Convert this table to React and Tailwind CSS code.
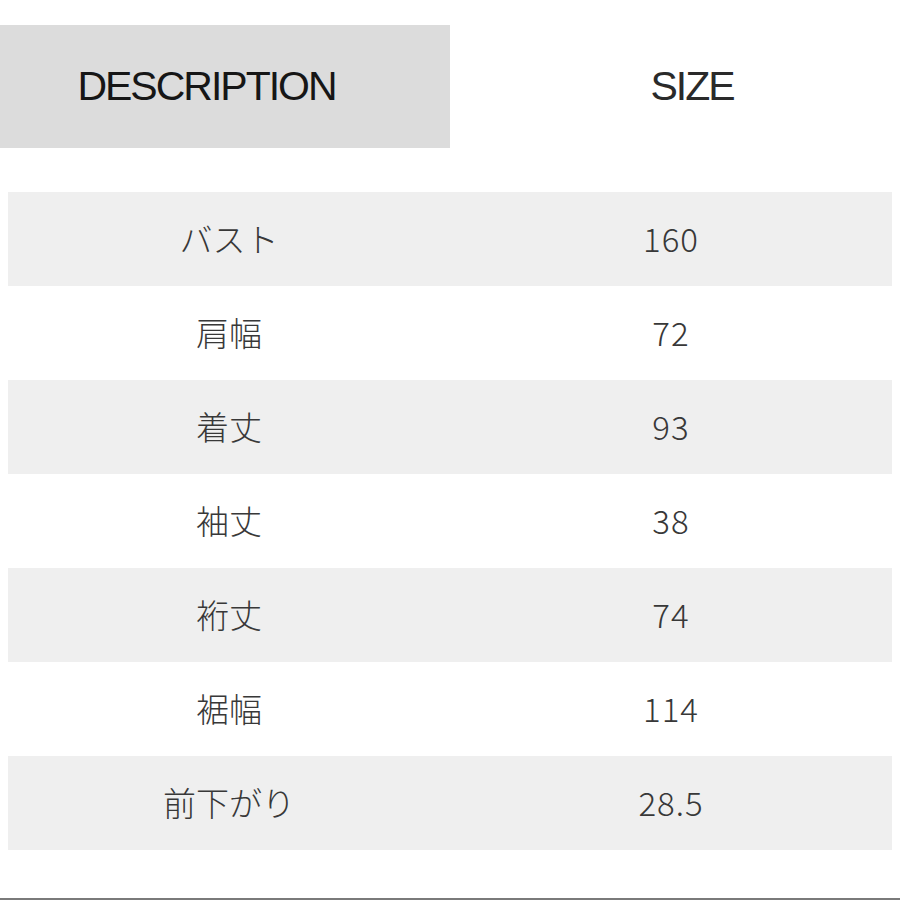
export default function App() {
  const rows = [
    ["バスト", "160"],
    ["肩幅", "72"],
    ["着丈", "93"],
    ["袖丈", "38"],
    ["裄丈", "74"],
    ["裾幅", "114"],
    ["前下がり", "28.5"],
  ];
  const font = { fontFamily: '"Liberation Sans", "Noto Sans CJK JP", sans-serif' };
  const cjk = { fontFamily: '"Noto Sans CJK JP", sans-serif', fontWeight: 300 };
  return (
    <div className="w-[900px] h-[900px] bg-white flex flex-col" style={font}>
      <div className="mt-[25px] flex h-[123px]">
        <div className="w-[450px] bg-[#dcdcdc] flex items-center justify-center pr-[37px] text-[41px] tracking-[-2px] text-[#161616]">
          DESCRIPTION
        </div>
        <div className="flex-1 flex items-center justify-center pl-[34px] text-[41px] tracking-[-2px] text-[#2a2a2a]">
          SIZE
        </div>
      </div>
      <div className="mt-[44px] mx-[8px] flex flex-col">
        {rows.map(([k, v], i) => (
          <div
            key={k}
            className={
              i % 2 === 0
                ? "h-[94px] grid grid-cols-2 bg-[#efefef] text-[#383838] text-[33px]"
                : "h-[94px] grid grid-cols-2 bg-white text-[#383838] text-[33px]"
            }
          >
            <div className="flex items-center justify-center" style={cjk}>{k}</div>
            <div className="flex items-center justify-center tracking-[1px]" style={cjk}>{v}</div>
          </div>
        ))}
      </div>
      <div className="mt-auto h-[2px] bg-[#7a7a7a]"></div>
    </div>
  );
}
